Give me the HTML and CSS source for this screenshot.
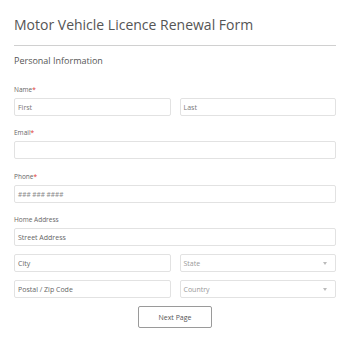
FILE: index.html
```html
<!DOCTYPE html>
<html>
<head>
<meta charset="utf-8">
<link rel="stylesheet" href="styles.css">
</head>
<body>
<div class="form">
  <h1 class="title">Motor Vehicle Licence Renewal Form</h1>
  <div class="divider"></div>
  <h2 class="section">Personal Information</h2>

  <div class="field f-first">
    <div class="label">Name<span class="req">*</span></div>
    <div class="row">
      <div class="input"><span class="ph">First</span></div>
      <div class="input"><span class="ph">Last</span></div>
    </div>
  </div>

  <div class="field">
    <div class="label">Email<span class="req">*</span></div>
    <div class="input full"></div>
  </div>

  <div class="field f-phone">
    <div class="label">Phone<span class="req">*</span></div>
    <div class="input full"><span class="ph mask">### ### ####</span></div>
  </div>

  <div class="field">
    <div class="label">Home Address</div>
    <div class="input full"><span class="ph dark">Street Address</span></div>
    <div class="row gap-top">
      <div class="input"><span class="ph dark">City</span></div>
      <div class="input select"><span class="ph">State</span><span class="arrow"></span></div>
    </div>
    <div class="row gap-top">
      <div class="input"><span class="ph dark">Postal / Zip Code</span></div>
      <div class="input select"><span class="ph">Country</span><span class="arrow"></span></div>
    </div>
  </div>

  <div class="actions">
    <button class="btn">Next Page</button>
  </div>
</div>
</body>
</html>
```

FILE: styles.css
```css
html, body {
  margin: 0;
  padding: 0;
  background: #ffffff;
}
body {
  font-family: "Open Sans", "Noto Sans", sans-serif;
  color: #555;
}
.form {
  width: 322px;
  padding: 0 14px;
}
.title {
  margin: 15px 0 0;
  font-size: 14px;
  line-height: 20px;
  font-weight: 400;
  color: #555;
}
.divider {
  margin-top: 10px;
  border-top: 1px solid #d0d0d0;
}
.section {
  margin: 9px 0 0;
  font-size: 9px;
  line-height: 12px;
  font-weight: 400;
  color: #555;
}
.field {
  display: flex;
  flex-direction: column;
  margin-top: 12px;
}
.field.f-first { margin-top: 18px; }
.field.f-phone { margin-top: 13px; }
.label {
  font-size: 6.5px;
  line-height: 10px;
  color: #666;
  margin-bottom: 3px;
}
.req { color: #e0312f; }
.row {
  display: flex;
  gap: 9px;
}
.gap-top { margin-top: 8px; }
.input {
  flex: 1;
  height: 16px;
  border: 1px solid #e2e2e2;
  border-radius: 2px;
  display: flex;
  align-items: center;
  padding: 0 3px;
  position: relative;
}
.input.full { flex: none; }
.ph {
  font-size: 7px;
  color: #777;
}
.ph.dark { color: #666; }
.ph.mask { color: #888; font-size: 6.5px; }
.select .ph { color: #999; }
.arrow {
  position: absolute;
  right: 8px;
  top: 7px;
  width: 0;
  height: 0;
  border-left: 2.5px solid transparent;
  border-right: 2.5px solid transparent;
  border-top: 3px solid #bbb;
}
.actions {
  display: flex;
  justify-content: center;
  margin-top: 8px;
}
.btn {
  width: 74px;
  height: 22px;
  background: #fff;
  border: 1px solid #9a9a9a;
  border-radius: 2px;
  font-family: "Open Sans", "Noto Sans", sans-serif;
  font-size: 7px;
  color: #555;
  padding: 0;
}
```
